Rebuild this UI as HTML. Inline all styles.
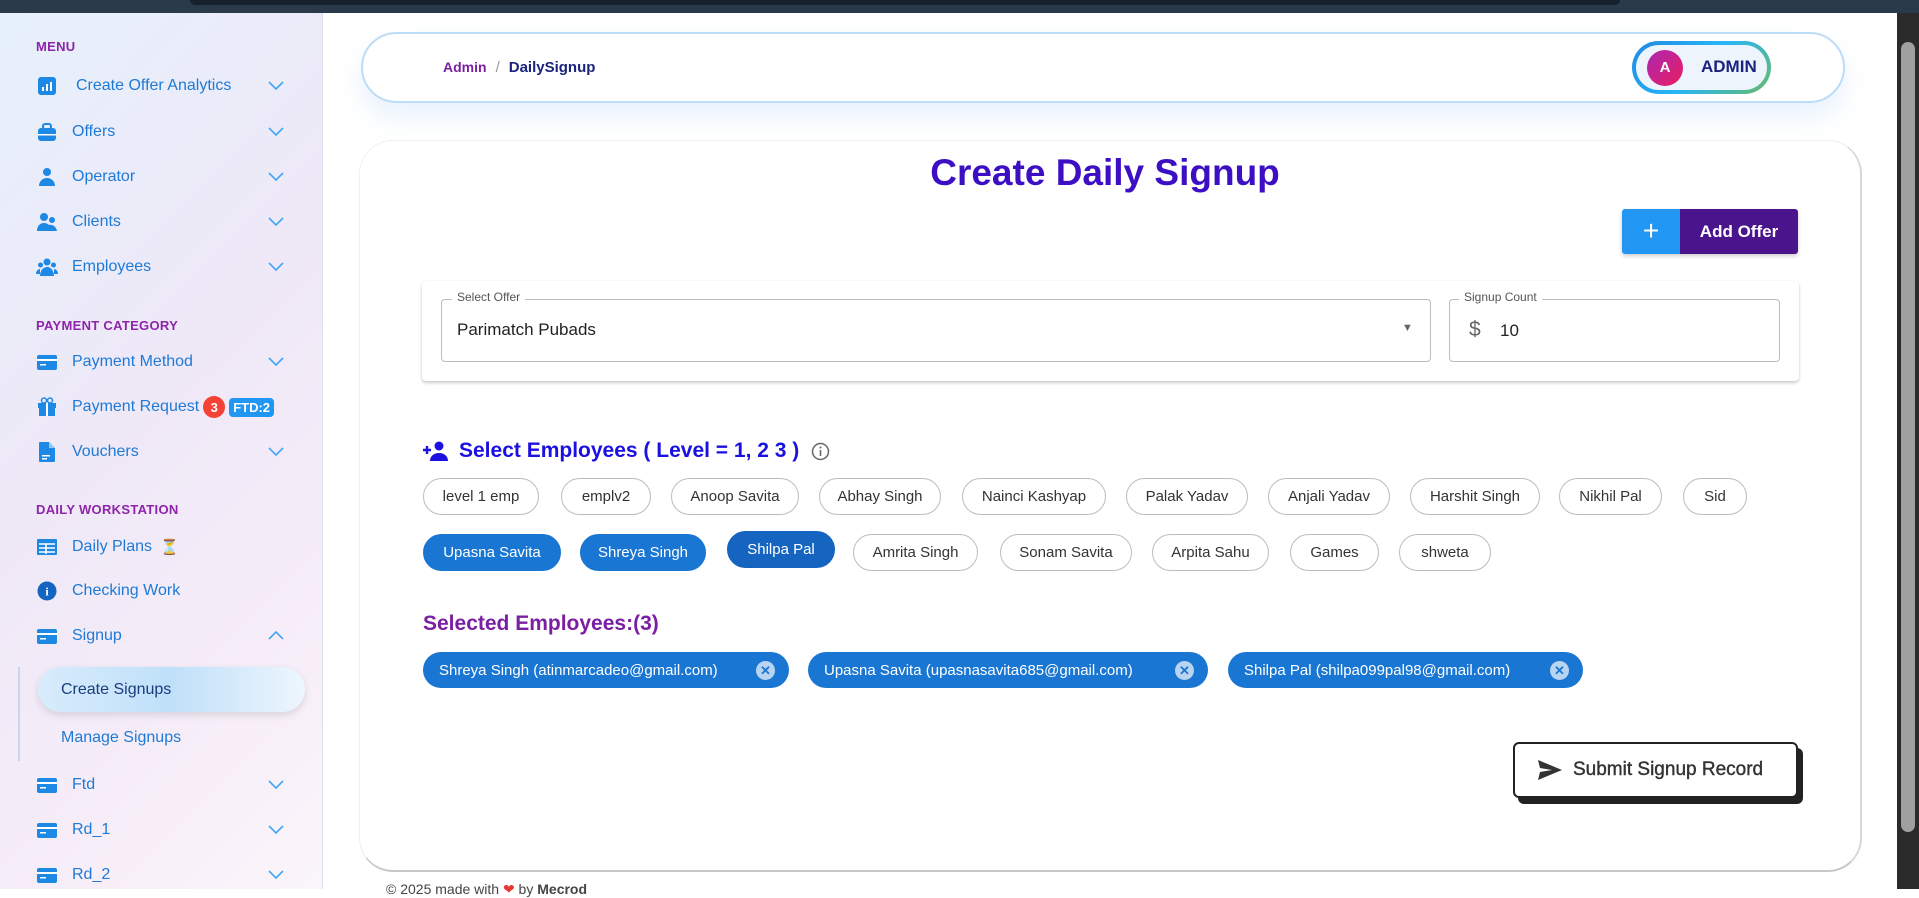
<!DOCTYPE html>
<html><head><meta charset="utf-8"><style>
*{box-sizing:border-box;margin:0;padding:0}
body{width:1919px;height:889px;overflow:hidden;font-family:"Liberation Sans",sans-serif;background:#fff;position:relative}
.abs{position:absolute}
#topbar{left:0;top:0;width:1919px;height:13px;background:#2b3a4a}
#side{left:0;top:13px;width:323px;height:876px;background:linear-gradient(135deg,#e6f0fb 0%,#efe8f7 45%,#f7eef8 80%,#fbf6fb 100%);border-right:1px solid #e2e0ee}
.hd{position:absolute;left:36px;font-size:13px;font-weight:bold;color:#8e24aa;letter-spacing:.3px}
.it{position:absolute;left:36px;font-size:16px;color:#1e7ad6;display:flex;align-items:center;height:24px}
.it svg{width:22px;height:22px;margin-right:14px}
.chev{position:absolute;left:268px;width:16px;height:10px}
#scroll{left:1897px;top:13px;width:22px;height:876px;background:#2a2a2a}
#thumb{left:1901px;top:42px;width:14px;height:790px;background:#a0a0a0;border-radius:7px}
.chip{position:absolute;height:37px;border:1px solid #bdbdbd;border-radius:19px;font-size:15px;color:#333;display:flex;align-items:center;justify-content:center;background:#fff}
.chip.on{background:#1976d2;border-color:#1976d2;color:#fff}
.sel{position:absolute;top:652px;height:36px;border-radius:18px;background:#1976d2;color:#fff;font-size:15px;display:flex;align-items:center;padding-left:16px}
.x{position:absolute;right:14px;top:9px;width:19px;height:19px;border-radius:50%;background:#b9d4f1;color:#1976d2;font-size:13px;font-weight:bold;text-align:center;line-height:19px}
</style></head><body>
<div class="abs" id="topbar"></div>
<div class="abs" style="left:190px;top:0;width:1430px;height:5px;background:#17212b;border-radius:0 0 6px 6px"></div>
<div class="abs" id="side">
<div class="hd" style="top:26px">MENU</div>
<div class="it" style="top:61px"><svg viewBox="0 0 22 22"><rect x="2" y="2" width="18" height="18" rx="3" fill="#1e88e5"/><rect x="6" y="12" width="2" height="4" fill="#fff"/><rect x="10" y="9" width="2" height="7" fill="#fff"/><rect x="14" y="7" width="2" height="9" fill="#fff"/></svg><span style="margin-left:4px">Create Offer Analytics</span></div>
<div class="it" style="top:107px"><svg viewBox="0 0 22 22"><rect x="7" y="3" width="8" height="5" rx="2" fill="none" stroke="#1e88e5" stroke-width="2"/><rect x="2" y="7" width="18" height="13" rx="3" fill="#1e88e5"/><rect x="2" y="13" width="18" height="1.5" fill="#fff"/></svg>Offers</div>
<div class="it" style="top:152px"><svg viewBox="0 0 22 22"><circle cx="11" cy="6" r="4" fill="#1e88e5"/><path d="M3 20c0-5 4-8 8-8s8 3 8 8z" fill="#1e88e5"/></svg>Operator</div>
<div class="it" style="top:197px"><svg viewBox="0 0 22 22"><circle cx="8" cy="6" r="4" fill="#1e88e5"/><circle cx="16" cy="9" r="3" fill="#1e88e5"/><path d="M1 20c0-5 3-8 7-8s7 3 7 8z M14 20c0-3-1-5-2-6 4-1 8 1 9 6z" fill="#1e88e5"/></svg>Clients</div>
<div class="it" style="top:242px"><svg viewBox="0 0 22 22"><circle cx="11" cy="6" r="3.5" fill="#1e88e5"/><circle cx="4.5" cy="9" r="2.5" fill="#1e88e5"/><circle cx="17.5" cy="9" r="2.5" fill="#1e88e5"/><path d="M4 20c0-5 3-9 7-9s7 4 7 9z M0 18c0-3 2-5 4-5l0 5z M22 18c0-3-2-5-4-5l0 5z" fill="#1e88e5"/></svg>Employees</div>
<div class="hd" style="top:305px">PAYMENT CATEGORY</div>
<div class="it" style="top:337px"><svg viewBox="0 0 22 22"><rect x="1" y="4" width="20" height="15" rx="2" fill="#1e88e5"/><rect x="1" y="8" width="20" height="2" fill="#fff"/><rect x="4" y="13" width="6" height="1.5" fill="#fff"/></svg>Payment Method</div>
<div class="it" style="top:382px"><svg viewBox="0 0 22 22"><rect x="2" y="7" width="18" height="5" fill="#1e88e5"/><rect x="3" y="12" width="16" height="8" fill="#1e88e5"/><rect x="10" y="7" width="2" height="13" fill="#fff"/><circle cx="8" cy="4.5" r="2.5" fill="none" stroke="#1e88e5" stroke-width="1.5"/><circle cx="14" cy="4.5" r="2.5" fill="none" stroke="#1e88e5" stroke-width="1.5"/></svg>Payment Request<span style="margin-left:4px;width:22px;height:22px;border-radius:50%;background:#f44336;color:#fff;font-size:13px;font-weight:bold;display:inline-flex;align-items:center;justify-content:center">3</span><span style="margin-left:4px;background:#2196f3;color:#fff;font-size:13px;font-weight:bold;padding:2px 4px;border-radius:4px">FTD:2</span></div>
<div class="it" style="top:427px"><svg viewBox="0 0 22 22"><path d="M4 1h9l6 6v13a1 1 0 0 1-1 1H4a1 1 0 0 1-1-1V2a1 1 0 0 1 1-1z" fill="#1e88e5"/><path d="M13 1v6h6" fill="#90caf9"/><rect x="6" y="14" width="8" height="1.5" fill="#fff"/><rect x="6" y="17" width="5" height="1.5" fill="#fff"/></svg>Vouchers</div>
<div class="hd" style="top:489px">DAILY WORKSTATION</div>
<div class="it" style="top:522px"><svg viewBox="0 0 22 22"><rect x="1" y="3" width="20" height="16" rx="1" fill="#1e88e5"/><path d="M3 8h16M3 12h16M3 16h16M10 8v10" stroke="#fff" stroke-width="1.6"/></svg>Daily Plans <span style="margin-left:8px;font-size:15px">⏳</span></div>
<div class="it" style="top:566px"><svg viewBox="0 0 22 22"><circle cx="11" cy="11" r="9.5" fill="#1565c0"/><text x="11" y="15.5" font-size="12" font-family="Liberation Serif" font-weight="bold" fill="#fff" text-anchor="middle">i</text></svg>Checking Work</div>
<div class="it" style="top:611px"><svg viewBox="0 0 22 22"><rect x="1" y="4" width="20" height="15" rx="2" fill="#1e88e5"/><rect x="1" y="8" width="20" height="2" fill="#fff"/><rect x="4" y="13" width="6" height="1.5" fill="#fff"/></svg>Signup</div>
<div class="abs" style="left:18px;top:654px;width:2px;height:94px;background:#c5d6ee"></div>
<div class="abs" style="left:38px;top:654px;width:267px;height:45px;border-radius:23px;background:linear-gradient(90deg,#d8ecfb,#bfe0fa 50%,#eef6fd);box-shadow:0 3px 8px rgba(0,0,0,.12);font-size:16px;color:#1a3d7c;padding-left:23px;line-height:45px">Create Signups</div>
<div class="it" style="left:61px;top:713px">Manage Signups</div>
<div class="it" style="top:760px"><svg viewBox="0 0 22 22"><rect x="1" y="4" width="20" height="15" rx="2" fill="#1e88e5"/><rect x="1" y="8" width="20" height="2" fill="#fff"/><rect x="4" y="13" width="6" height="1.5" fill="#fff"/></svg>Ftd</div>
<div class="it" style="top:805px"><svg viewBox="0 0 22 22"><rect x="1" y="4" width="20" height="15" rx="2" fill="#1e88e5"/><rect x="1" y="8" width="20" height="2" fill="#fff"/><rect x="4" y="13" width="6" height="1.5" fill="#fff"/></svg>Rd_1</div>
<div class="it" style="top:850px"><svg viewBox="0 0 22 22"><rect x="1" y="4" width="20" height="15" rx="2" fill="#1e88e5"/><rect x="1" y="8" width="20" height="2" fill="#fff"/><rect x="4" y="13" width="6" height="1.5" fill="#fff"/></svg>Rd_2</div>
<svg class="chev" style="top:68px" viewBox="0 0 16 10"><path d="M1 1l7 7 7-7" fill="none" stroke="#42a5f5" stroke-width="1.6"/></svg>
<svg class="chev" style="top:114px" viewBox="0 0 16 10"><path d="M1 1l7 7 7-7" fill="none" stroke="#42a5f5" stroke-width="1.6"/></svg>
<svg class="chev" style="top:159px" viewBox="0 0 16 10"><path d="M1 1l7 7 7-7" fill="none" stroke="#42a5f5" stroke-width="1.6"/></svg>
<svg class="chev" style="top:204px" viewBox="0 0 16 10"><path d="M1 1l7 7 7-7" fill="none" stroke="#42a5f5" stroke-width="1.6"/></svg>
<svg class="chev" style="top:249px" viewBox="0 0 16 10"><path d="M1 1l7 7 7-7" fill="none" stroke="#42a5f5" stroke-width="1.6"/></svg>
<svg class="chev" style="top:344px" viewBox="0 0 16 10"><path d="M1 1l7 7 7-7" fill="none" stroke="#42a5f5" stroke-width="1.6"/></svg>
<svg class="chev" style="top:434px" viewBox="0 0 16 10"><path d="M1 1l7 7 7-7" fill="none" stroke="#42a5f5" stroke-width="1.6"/></svg>
<svg class="chev" style="top:617px" viewBox="0 0 16 10"><path d="M1 9l7-7 7 7" fill="none" stroke="#42a5f5" stroke-width="1.6"/></svg>
<svg class="chev" style="top:767px" viewBox="0 0 16 10"><path d="M1 1l7 7 7-7" fill="none" stroke="#42a5f5" stroke-width="1.6"/></svg>
<svg class="chev" style="top:812px" viewBox="0 0 16 10"><path d="M1 1l7 7 7-7" fill="none" stroke="#42a5f5" stroke-width="1.6"/></svg>
<svg class="chev" style="top:857px" viewBox="0 0 16 10"><path d="M1 1l7 7 7-7" fill="none" stroke="#42a5f5" stroke-width="1.6"/></svg>
</div>
<div class="abs" id="scroll"></div><div class="abs" id="thumb"></div>

<div class="abs" style="left:361px;top:32px;width:1484px;height:71px;border:2px solid #bcdcf7;border-radius:36px;background:#fff;box-shadow:0 14px 26px rgba(100,170,240,.15)"></div>
<div class="abs" style="left:443px;top:59px;font-size:15px;color:#333"><span style="color:#7b1fa2;font-weight:bold;font-size:14px">Admin</span><span style="color:#999;margin:0 9px">/</span><span style="color:#1a237e;font-weight:bold">DailySignup</span></div>
<div class="abs" style="left:1632px;top:41px;width:139px;height:53px;border-radius:27px;background:linear-gradient(135deg,#1e88e5,#29b6f6 50%,#66bb6a);padding:4px"><div style="width:100%;height:100%;border-radius:23px;background:#eef4fb;position:relative"><div style="position:absolute;left:11px;top:5px;width:36px;height:36px;border-radius:50%;background:linear-gradient(135deg,#ab27b0,#e91e63);color:#fff;font-weight:bold;font-size:15px;text-align:center;line-height:36px">A</div><div style="position:absolute;left:65px;top:12px;font-size:17px;font-weight:bold;color:#1a237e">ADMIN</div></div></div>

<div class="abs" style="left:359px;top:140px;width:1503px;height:732px;border-radius:34px;border:1px solid #f0f0f0;border-bottom:2px solid #c8c8c8;border-right:2px solid #d8d8d8;background:#fff"></div>
<div class="abs" style="left:360px;top:152px;width:1490px;text-align:center;font-size:37px;font-weight:bold;color:#3d0fc4">Create Daily Signup</div>
<div class="abs" style="left:1622px;top:209px;width:176px;height:45px;border-radius:3px;overflow:hidden;display:flex;box-shadow:0 2px 4px rgba(0,0,0,.2)"><div style="width:58px;background:#2196f3;color:#fff;font-size:28px;text-align:center;line-height:43px;font-weight:300">+</div><div style="flex:1;background:#4a148c;color:#fff;font-size:17px;font-weight:bold;text-align:center;line-height:45px">Add Offer</div></div>

<div class="abs" style="left:422px;top:281px;width:1377px;height:100px;border-radius:4px;background:#fff;box-shadow:0 2px 3px rgba(0,0,0,.2),0 0 2px rgba(0,0,0,.05)"></div>
<div class="abs" style="left:441px;top:299px;width:990px;height:63px;border:1px solid #bdbdbd;border-radius:4px"></div>
<div class="abs" style="left:452px;top:290px;background:#fff;padding:0 5px;font-size:12px;color:#555">Select Offer</div>
<div class="abs" style="left:457px;top:320px;font-size:17px;color:#222">Parimatch Pubads</div>
<div class="abs" style="left:1402px;top:322px;font-size:11px;color:#666">▼</div>
<div class="abs" style="left:1449px;top:299px;width:331px;height:63px;border:1px solid #bdbdbd;border-radius:4px"></div>
<div class="abs" style="left:1459px;top:290px;background:#fff;padding:0 5px;font-size:12px;color:#555">Signup Count</div>
<div class="abs" style="left:1469px;top:318px;font-size:21px;color:#666">$</div>
<div class="abs" style="left:1500px;top:321px;font-size:17px;color:#222">10</div>

<div class="abs" style="left:423px;top:439px;display:flex;align-items:center;font-size:21px;font-weight:bold;color:#1a10e0"><svg width="26" height="22" viewBox="0 0 26 22"><path d="M0 10h8M4 6v8" stroke="#1a10e0" stroke-width="2.4"/><circle cx="16" cy="6" r="4.5" fill="#1a10e0"/><path d="M7 21c0-5 4-8 9-8s9 3 9 8z" fill="#1a10e0"/></svg><span style="margin-left:10px">Select Employees ( Level = 1, 2 3 )</span><svg style="margin-left:12px" width="19" height="19" viewBox="0 0 19 19"><circle cx="9.5" cy="9.5" r="8" fill="none" stroke="#666" stroke-width="1.5"/><path d="M9.5 8v6" stroke="#666" stroke-width="1.6"/><circle cx="9.5" cy="5.5" r="1" fill="#666"/></svg></div>

<div class="chip" style="left:423px;top:478px;width:116px">level 1 emp</div>
<div class="chip" style="left:561px;top:478px;width:90px">emplv2</div>
<div class="chip" style="left:671px;top:478px;width:128px">Anoop Savita</div>
<div class="chip" style="left:819px;top:478px;width:122px">Abhay Singh</div>
<div class="chip" style="left:962px;top:478px;width:144px">Nainci Kashyap</div>
<div class="chip" style="left:1126px;top:478px;width:122px">Palak Yadav</div>
<div class="chip" style="left:1268px;top:478px;width:122px">Anjali Yadav</div>
<div class="chip" style="left:1410px;top:478px;width:130px">Harshit Singh</div>
<div class="chip" style="left:1559px;top:478px;width:103px">Nikhil Pal</div>
<div class="chip" style="left:1683px;top:478px;width:64px">Sid</div>

<div class="chip on" style="left:423px;top:534px;width:138px">Upasna Savita</div>
<div class="chip on" style="left:580px;top:534px;width:126px">Shreya Singh</div>
<div class="chip on" style="left:727px;top:531px;width:108px;background:#1565c0;border-color:#1565c0">Shilpa Pal</div>
<div class="chip" style="left:853px;top:534px;width:125px">Amrita Singh</div>
<div class="chip" style="left:1000px;top:534px;width:132px">Sonam Savita</div>
<div class="chip" style="left:1152px;top:534px;width:117px">Arpita Sahu</div>
<div class="chip" style="left:1290px;top:534px;width:89px">Games</div>
<div class="chip" style="left:1399px;top:534px;width:92px">shweta</div>

<div class="abs" style="left:423px;top:612px;font-size:21px;font-weight:bold;color:#7b1fa2">Selected Employees:(3)</div>
<div class="sel" style="left:423px;width:366px">Shreya Singh (atinmarcadeo@gmail.com)<span class="x">✕</span></div>
<div class="sel" style="left:808px;width:400px">Upasna Savita (upasnasavita685@gmail.com)<span class="x">✕</span></div>
<div class="sel" style="left:1228px;width:355px">Shilpa Pal (shilpa099pal98@gmail.com)<span class="x">✕</span></div>

<div class="abs" style="left:1518px;top:748px;width:285px;height:56px;background:#222;border-radius:6px"></div>
<div class="abs" style="left:1513px;top:742px;width:285px;height:56px;background:#fff;border:2px solid #222;border-radius:6px;display:flex;align-items:center;padding-left:22px;font-size:19px;color:#333;font-weight:bold"><svg width="26" height="22" viewBox="0 0 26 22"><path d="M1 1l24 10L1 21l2-8 12-2-12-2z" fill="#333"/></svg><span style="margin-left:10px;font-weight:normal;-webkit-text-stroke:0.4px #333">Submit Signup Record</span></div>

<div class="abs" style="left:386px;top:881px;font-size:14px;color:#444">© 2025 made with <span style="color:#e53935">❤</span> by <b>Mecrod</b></div>
</body></html>
